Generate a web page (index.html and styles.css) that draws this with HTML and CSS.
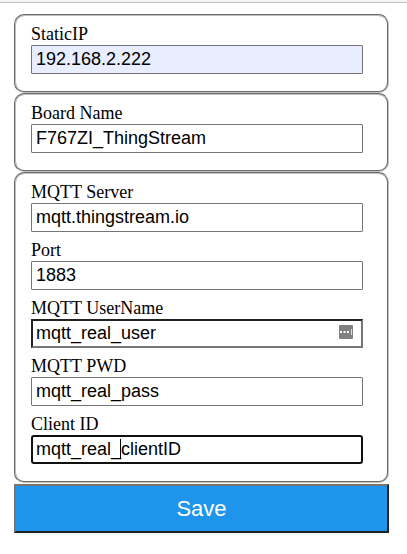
FILE: index.html
```
<!DOCTYPE html>
<html lang="en">
<head>
<meta charset="utf-8">
<title>Board Settings</title>
<link rel="stylesheet" href="styles.css">
</head>
<body>
<header class="topbar"></header>
<form class="settings">
  <fieldset class="group">
    <div class="field">
      <label for="ip">StaticIP</label>
      <input class="autofilled" id="ip" type="text" value="192.168.2.222">
    </div>
  </fieldset>
  <fieldset class="group">
    <div class="field">
      <label for="board">Board Name</label>
      <input id="board" type="text" value="F767ZI_ThingStream">
    </div>
  </fieldset>
  <fieldset class="group">
    <div class="field">
      <label for="server">MQTT Server</label>
      <input id="server" type="text" value="mqtt.thingstream.io">
    </div>
    <div class="field">
      <label for="port">Port</label>
      <input id="port" type="text" value="1883">
    </div>
    <div class="field">
      <label for="user">MQTT UserName</label>
      <input class="inset" id="user" type="text" value="mqtt_real_user">
      <svg class="key-icon" viewBox="0 0 14 14" aria-hidden="true">
        <rect width="14" height="14" rx="1" fill="#808080"/>
        <path d="M1 6h2v2H1zM4.500 6h2v2h-2zM8 6h2v2H8z" fill="#fff"/>
        <path d="M12 4h1v6h-1z" fill="#ddd"/>
      </svg>
    </div>
    <div class="field">
      <label for="pwd">MQTT PWD</label>
      <input id="pwd" type="text" value="mqtt_real_pass">
    </div>
    <div class="field">
      <label for="client">Client ID</label>
      <input class="active" id="client" type="text" value="mqtt_real_clientID">
      <span class="caret"></span>
    </div>
  </fieldset>
  <button class="save" type="submit">Save</button>
</form>
</body>
</html>
```
FILE: styles.css
```
* {
  box-sizing: border-box;
}

body {
  margin: 0;
  background: #fff;
  color: #000;
  font: 18px/20px "Liberation Serif", serif;
}

.topbar {
  height: 3px;
  background: #f5f5f5;
  border-bottom: 1px solid #c0c0c0;
}

.settings {
  padding: 11px 18px 20px 14px;
}

.group {
  margin: 0;
  padding: 8px 24px 17px 15px;
  border: 2px groove #c0c0c0;
  border-radius: 10px;
}

.field {
  position: relative;
  display: flex;
  flex-direction: column;
}

.field + .field {
  margin-top: 8px;
}

.field label {
  height: 21px;
}

.field input {
  width: 100%;
  height: 29px;
  margin: 0;
  padding: 0 4px;
  border: 1px solid #767676;
  border-radius: 1px;
  background: #fff;
  color: #000;
  font: 18px "Liberation Sans", sans-serif;
  outline: none;
}

.field .autofilled {
  background: #e8eeff;
}

.field .inset {
  padding: 0 3px;
  border: 2px solid;
  border-color: #222 #767676 #767676 #222;
  border-radius: 0;
}

.field .active {
  padding: 0 3px;
  border: 2px solid #101010;
  border-radius: 3px;
}

.key-icon {
  position: absolute;
  right: 10px;
  bottom: 9px;
  width: 14px;
  height: 14px;
}

.caret {
  position: absolute;
  left: 89px;
  bottom: 5px;
  width: 1px;
  height: 20px;
  background: #000;
}

.save {
  display: block;
  width: 100%;
  height: 49px;
  margin: 1px 0 0;
  padding: 0;
  border: 2px solid;
  border-color: #767676 #222 #222 #767676;
  background: #1e95ea;
  color: #fff;
  font: 22px "Liberation Sans", sans-serif;
}
```
